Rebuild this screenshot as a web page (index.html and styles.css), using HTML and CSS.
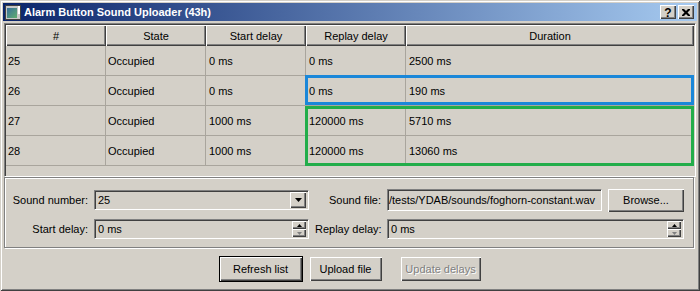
FILE: index.html
```html
<!DOCTYPE html>
<html lang="en">

<head>
    <meta charset="UTF-8">
    <meta name="viewport" content="width=device-width, initial-scale=1.0">
    <title>Alarm Button Sound Uploader</title>
    <link rel="stylesheet" href="styles.css">
</head>

<body>
    <div class="window">
        <div class="titlebar">
            <svg class="app-icon" width="16" height="16" viewBox="0 0 16 16">
                <defs>
                    <linearGradient id="scr" x1="0" y1="0" x2="1" y2="1">
                        <stop offset="0" stop-color="#3a6f9c"/>
                        <stop offset="1" stop-color="#5fae6e"/>
                    </linearGradient>
                </defs>
                <rect x="0.5" y="1.5" width="15" height="14" fill="#c8c8c8" stroke="#404040"/>
                <rect x="2" y="4" width="10" height="10" fill="url(#scr)"/>
                <rect x="13" y="2" width="2" height="8" fill="#fff"/>
            </svg>
            <span class="title">Alarm Button Sound Uploader (43h)</span>
            <div class="caption-buttons">
                <div class="cap-btn help">?</div>
                <div class="cap-btn">
                    <svg width="8" height="7" viewBox="0 0 8 7">
                        <path d="M0 0h2l2 2 2-2h2v1l-2.5 2.5 2.5 2.5v1h-2l-2-2-2 2h-2v-1l2.5-2.5-2.5-2.5z" fill="#000"/>
                    </svg>
                </div>
            </div>
        </div>

        <div class="content">
            <div class="table-frame">
                <table class="sounds">
                    <colgroup>
                        <col class="col-narrow">
                        <col class="col-narrow">
                        <col class="col-narrow">
                        <col class="col-narrow">
                        <col>
                    </colgroup>
                    <thead>
                        <tr>
                            <th>#</th>
                            <th>State</th>
                            <th>Start delay</th>
                            <th>Replay delay</th>
                            <th>Duration</th>
                        </tr>
                    </thead>
                    <tbody>
                        <tr>
                            <td>25</td>
                            <td>Occupied</td>
                            <td>0 ms</td>
                            <td>0 ms</td>
                            <td>2500 ms</td>
                        </tr>
                        <tr>
                            <td>26</td>
                            <td>Occupied</td>
                            <td>0 ms</td>
                            <td>0 ms</td>
                            <td>190 ms</td>
                        </tr>
                        <tr>
                            <td>27</td>
                            <td>Occupied</td>
                            <td>1000 ms</td>
                            <td>120000 ms</td>
                            <td>5710 ms</td>
                        </tr>
                        <tr>
                            <td>28</td>
                            <td>Occupied</td>
                            <td>1000 ms</td>
                            <td>120000 ms</td>
                            <td>13060 ms</td>
                        </tr>
                    </tbody>
                </table>
                <!-- highlight boxes drawn over the rows -->
                <div class="mark mark-blue"></div>
                <div class="mark mark-green"></div>
            </div>

            <div class="group">
                <div class="form-grid">
                    <label class="lbl">Sound number:</label>
                    <div class="combo">
                        <span class="value">25</span>
                        <span class="drop-btn">
                            <svg width="7" height="4" viewBox="0 0 7 4"><path d="M0 0h7l-3.5 4z" fill="#000"/></svg>
                        </span>
                    </div>
                    <label class="lbl">Sound file:</label>
                    <div class="field">/tests/YDAB/sounds/foghorn-constant.wav</div>
                    <div class="btn browse">Browse...</div>

                    <label class="lbl">Start delay:</label>
                    <div class="spin">
                        <span class="value">0 ms</span>
                        <span class="spin-btns">
                            <span class="spin-up"><svg width="5" height="3" viewBox="0 0 5 3"><path d="M2.5 0l2.5 3h-5z" fill="#000"/></svg></span>
                            <span class="spin-down"><svg width="5" height="3" viewBox="0 0 5 3"><path d="M0 0h5l-2.5 3z" fill="#808080"/></svg></span>
                        </span>
                    </div>
                    <label class="lbl">Replay delay:</label>
                    <div class="spin wide">
                        <span class="value">0 ms</span>
                        <span class="spin-btns">
                            <span class="spin-up"><svg width="5" height="3" viewBox="0 0 5 3"><path d="M2.5 0l2.5 3h-5z" fill="#000"/></svg></span>
                            <span class="spin-down"><svg width="5" height="3" viewBox="0 0 5 3"><path d="M0 0h5l-2.5 3z" fill="#808080"/></svg></span>
                        </span>
                    </div>
                </div>
            </div>

            <div class="actions">
                <div class="btn default refresh">Refresh list</div>
                <div class="btn upload">Upload file</div>
                <div class="btn disabled update">Update delays</div>
            </div>
        </div>
    </div>
</body>

</html>
```

FILE: styles.css
```css
* {
    box-sizing: border-box;
}

body {
    margin: 0;
    background: #d4d0c8;
    font-family: "Liberation Sans", Arial, sans-serif;
    font-size: 11px;
    color: #000;
}

.window {
    width: 700px;
    height: 291px;
    padding: 3px;
    background: #d4d0c8;
    box-shadow: inset 1px 1px #d4d0c8, inset -1px -1px #404040, inset 2px 2px #fff, inset -2px -2px #808080;
    display: flex;
    flex-direction: column;
}

/* title bar */
.titlebar {
    height: 18px;
    display: flex;
    align-items: center;
    padding: 0 3px 0 2px;
    background: linear-gradient(to right, #0a246a, #a6caf0);
}

.app-icon {
    flex: none;
    margin-right: 3px;
}

.title {
    flex: 1;
    color: #fff;
    font-weight: bold;
    font-size: 11px;
}

.caption-buttons {
    display: flex;
    gap: 2px;
}

.cap-btn {
    width: 16px;
    height: 14px;
    display: flex;
    align-items: center;
    justify-content: center;
    background: #d4d0c8;
    box-shadow: inset 1px 1px #fff, inset -1px -1px #404040, inset -2px -2px #808080;
    font-weight: bold;
    font-size: 12px;
    line-height: 1;
}

.cap-btn.help {
    padding-top: 1px;
}

/* main area */
.content {
    padding: 2px 1px 0;
}

.table-frame {
    position: relative;
    height: 154px;
    padding: 1px;
    border: 1px solid;
    border-color: #808080 #fff #fff #808080;
    box-shadow: inset 1px 1px #404040, inset -1px -1px #d4d0c8;
}

.sounds {
    width: 688px;
    table-layout: fixed;
    border-collapse: separate;
    border-spacing: 0;
}

.col-narrow {
    width: 100px;
}

.sounds th {
    height: 21px;
    padding: 0;
    font-weight: normal;
    text-align: center;
    box-shadow: inset 1px 1px #fff, inset -1px -1px #404040, inset -2px -2px #808080;
}

.sounds td {
    height: 30px;
    padding: 0 0 0 2px;
    border-right: 1px solid #a9a59d;
    border-bottom: 1px solid #a9a59d;
    white-space: nowrap;
}

.sounds td:nth-child(3),
.sounds td:nth-child(4),
.sounds td:nth-child(5) {
    padding-left: 3px;
}

.sounds td:last-child {
    border-right: none;
}

.mark {
    position: absolute;
    left: 300px;
    width: 389px;
    border: 3px solid;
}

.mark-blue {
    top: 51px;
    height: 30px;
    border-color: #1a87d9;
}

.mark-green {
    top: 82px;
    height: 60px;
    border-color: #22ad4a;
}

/* settings group */
.group {
    width: 690px;
    border: 1px solid #808080;
    box-shadow: inset 1px 1px #fff, 1px 1px #fff;
    padding: 11px 9px 7px 5px;
}

.form-grid {
    display: grid;
    grid-template-columns: 78px 215px 66px 215px 76px;
    grid-template-rows: 22px 22px;
    column-gap: 6px;
    row-gap: 7px;
    align-items: center;
}

.lbl {
    text-align: right;
    white-space: nowrap;
}

.combo,
.spin,
.field {
    display: flex;
    align-items: center;
    border: 1px solid;
    border-color: #808080 #fff #fff #808080;
    box-shadow: inset 1px 1px #404040, inset -1px -1px #d4d0c8;
    background: #d4d0c8;
    padding: 2px;
}

.combo,
.spin {
    height: 20px;
}

.field {
    height: 22px;
    padding-left: 1px;
    overflow: hidden;
    white-space: nowrap;
}

.value {
    flex: 1;
    padding-left: 1px;
}

.spin.wide {
    grid-column: 4 / 6;
}

.drop-btn {
    width: 16px;
    height: 16px;
    display: flex;
    align-items: center;
    justify-content: center;
    box-shadow: inset 1px 1px #fff, inset -1px -1px #404040, inset -2px -2px #808080;
}

.spin-btns {
    width: 14px;
    height: 16px;
    display: flex;
    flex-direction: column;
}

.spin-up,
.spin-down {
    flex: 1;
    display: flex;
    align-items: center;
    justify-content: center;
    box-shadow: inset 1px 1px #fff, inset -1px -1px #404040, inset -2px -2px #808080;
}

/* push buttons */
.btn {
    display: flex;
    align-items: center;
    justify-content: center;
    height: 24px;
    background: #d4d0c8;
    box-shadow: inset 1px 1px #fff, inset -1px -1px #404040, inset -2px -2px #808080;
    white-space: nowrap;
}

.browse {
    height: 23px;
}

.actions {
    height: 26px;
    margin-top: 8px;
    display: flex;
    align-items: center;
    justify-content: center;
    padding-right: 1px;
}

.btn.default {
    height: 26px;
    border: 1px solid #000;
    box-shadow: inset 1px 1px #fff, inset -1px -1px #404040, inset -2px -2px #808080;
}

.refresh {
    width: 84px;
}

.upload {
    width: 72px;
    margin-left: 7px;
}

.update {
    width: 80px;
    margin-left: 19px;
}

.btn.disabled {
    color: #808080;
    text-shadow: 1px 1px #fff;
}
```
